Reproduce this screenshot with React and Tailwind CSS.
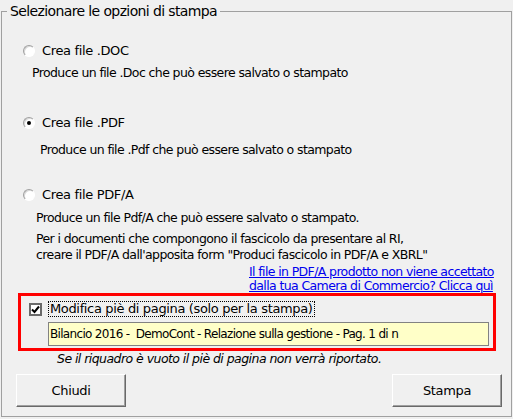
import React, { useState } from "react";

const Radio = ({ checked }) => (
  <span className="relative inline-block w-[12px] h-[12px] rounded-full border border-t-[#a0a0a0] border-l-[#a0a0a0] border-b-white border-r-white bg-white shadow-[inset_1px_1px_0_#d8d8d8]">
    {checked && (
      <span className="absolute left-[3px] top-[3px] w-[4px] h-[4px] rounded-full bg-black" />
    )}
  </span>
);

const Button = ({ children }) => (
  <button className="w-[110px] h-[33px] bg-[#f0f0f0] border border-t-white border-l-white border-r-[#696969] border-b-[#696969] shadow-[inset_-1px_-1px_0_#a0a0a0] text-[13px] tracking-[-0.35px] text-black">
    {children}
  </button>
);

const App = () => {
  const [format, setFormat] = useState("pdf");
  const [footer, setFooter] = useState(true);

  const options = [
    { id: "doc", label: "Crea file .DOC" },
    { id: "pdf", label: "Crea file .PDF" },
    { id: "pdfa", label: "Crea file PDF/A" }
  ];

  return (
    <div
      className="w-[513px] h-[419px] bg-[#f0f0f0] text-black overflow-hidden"
      style={{ fontFamily: "'DejaVu Sans', sans-serif" }}
    >
      <fieldset className="ml-[1px] mt-[3px] w-[511px] h-[414px] border border-[#a0a0a0] p-0 m-0">
        <legend className="ml-[5px] px-[3px] text-[14px] leading-[16px] tracking-[-0.62px]">
          Selezionare le opzioni di stampa
        </legend>

        <div className="flex flex-col text-[12.5px] leading-[16px] tracking-[-0.6px]">
          {/* .DOC */}
          <label
            className="mt-[24px] ml-[21px] flex items-center gap-[7px] h-[16px] text-[13px] tracking-[-0.35px]"
            onClick={() => setFormat(options[0].id)}
          >
            <Radio checked={format === "doc"} />
            {options[0].label}
          </label>
          <p className="mt-[6px] ml-[30px]">
            Produce un file .Doc che può essere salvato o stampato
          </p>

          {/* .PDF */}
          <label
            className="mt-[34px] ml-[21px] flex items-center gap-[7px] h-[16px] text-[13px] tracking-[-0.35px]"
            onClick={() => setFormat(options[1].id)}
          >
            <Radio checked={format === "pdf"} />
            {options[1].label}
          </label>
          <p className="mt-[11px] ml-[38px]">
            Produce un file .Pdf che può essere salvato o stampato
          </p>

          {/* PDF/A */}
          <label
            className="mt-[29px] ml-[21px] flex items-center gap-[7px] h-[16px] text-[13px] tracking-[-0.35px]"
            onClick={() => setFormat(options[2].id)}
          >
            <Radio checked={format === "pdfa"} />
            {options[2].label}
          </label>
          <p className="mt-[7px] ml-[34px]">
            Produce un file Pdf/A che può essere salvato o stampato.
          </p>
          <p className="mt-[5px] ml-[34px]">
            Per i documenti che compongono il fascicolo da presentare al RI,
            <br />
            creare il PDF/A dall'apposita form "Produci fascicolo in PDF/A e XBRL"
          </p>
          <a
            href="#"
            className="mt-[2px] ml-[247px] leading-[14px] text-[#0000ee] underline tracking-[-0.62px]"
          >
            Il file in PDF/A prodotto non viene accettato
            <br />
            dalla tua Camera di Commercio? Clicca quì
          </a>

          {/* footer */}
          <div className="ml-[16px] w-[478px] h-[58px] border-[3px] border-[#ff0000] flex flex-col">
            <label
              className="mt-[5px] ml-[8px] flex items-center gap-[6px] h-[16px] text-[13px] tracking-[-0.35px]"
              onClick={() => setFooter(!footer)}
            >
              <span className="w-[13px] h-[13px] border-2 border-[#6a6a6a] bg-white flex items-center justify-center">
                {footer && (
                  <svg width="9" height="9" viewBox="0 0 9 9">
                    <path d="M1 4.5 L3.5 7 L8 1.5" fill="none" stroke="black" strokeWidth="2" />
                  </svg>
                )}
              </span>
              <span className="border border-dotted border-black px-[1px] leading-[14px]">
                Modifica piè di pagina (solo per la stampa)
              </span>
            </label>
            <div className="mt-[5px] ml-[27px] w-[441px] h-[24px] bg-[#ffffc8] border border-[#828282] flex items-center px-[1px] text-[12px] tracking-[-0.68px] whitespace-pre">
              {"Bilancio 2016 -  DemoCont - Relazione sulla gestione - Pag. 1 di n"}
            </div>
          </div>

          <p className="ml-[55px] italic tracking-[-0.55px]">
            Se il riquadro è vuoto il piè di pagina non verrà riportato.
          </p>

          <div className="mt-[7px] ml-[14px] w-[486px] flex justify-between">
            <Button>Chiudi</Button>
            <Button>Stampa</Button>
          </div>
        </div>
      </fieldset>
    </div>
  );
};

export default App;
